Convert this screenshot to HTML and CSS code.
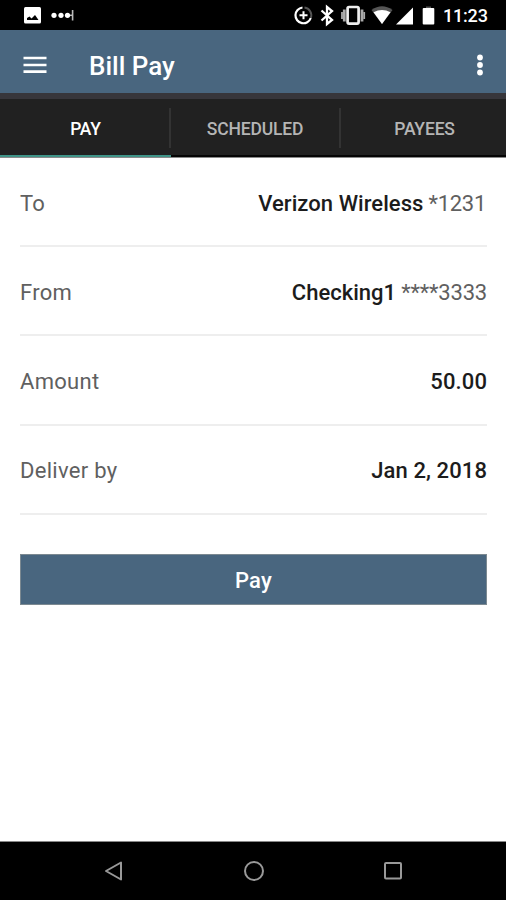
FILE: index.html
```html
<!DOCTYPE html>
<html lang="en">
<head>
<meta charset="utf-8">
<title>Bill Pay</title>
<link rel="stylesheet" href="styles.css">
</head>
<body>
<div class="screen">
  <div class="status">
    <svg class="status-left" width="52" height="30" viewBox="24 0 52 30">
      <rect x="24" y="7" width="17" height="16.500" rx="1.500" fill="#fff"/>
      <path d="M27 20V18L29.500 16.500 31.500 18.500 35 15 38.500 20Z" fill="#000"/>
      <g fill="#fff"><circle cx="54" cy="15.300" r="2.600"/><circle cx="61" cy="15.300" r="2.600"/><circle cx="67.500" cy="15.300" r="2.600"/></g>
      <path d="M70 15.300h3" stroke="#bbb" stroke-width="1.500"/><path d="M72.600 10v10.500" stroke="#bbb" stroke-width="1.600"/>
    </svg>
    <div class="status-right">
      <svg width="144" height="30" viewBox="293 0 144 30">
        <g fill="none" stroke="#fff">
          <path d="M302.500 7.500A7.900 7.900 0 1 0 310.800 18" stroke-width="2.200"/>
          <path d="M304.500 7.500A7.900 7.900 0 0 1 310.800 18" stroke="#555" stroke-width="2"/>
          <path d="M303.500 11.300v8M299.500 15.300h8" stroke-width="2"/>
          <path d="M321.500 10.500 332 20 327 24V7L332 11 321.500 20.500" stroke-width="2.300"/>
          <rect x="347.600" y="7" width="11" height="16.600" rx="1.500" stroke="#eee" stroke-width="2.700"/>
          <path d="M344.300 9.500v12M362 9.500v12" stroke="#aaa" stroke-width="2.800"/>
          <path d="M342 12v7M364.200 12v7" stroke="#aaa" stroke-width="1.800"/>
        </g>
        <path d="M371.500 10Q382 2.500 392.500 10L382 24Z" fill="#555"/>
        <path d="M373.500 12.300Q382 7.500 390.500 12.300L382 24Z" fill="#fff"/>
        <path d="M396 24.500 413 7.500V24.500Z" fill="#fff"/>
        <path d="M426 6.500h5V8h-5z" fill="#555"/><rect x="422.700" y="8" width="11.600" height="16.500" rx="1" fill="#fff"/>
      </svg>
      <span class="clock">11:23</span>
    </div>
  </div>
  <header class="appbar">
    <svg width="24" height="18" viewBox="0 0 24 18"><path d="M.5 2H23.500M.5 9H23.500M.5 15.700H23.500" stroke="#fff" stroke-width="2.700"/></svg>
    <h1>Bill Pay</h1>
    <svg width="8" height="22" viewBox="0 0 8 22" fill="#fff"><circle cx="4" cy="3.500" r="2.900"/><circle cx="4" cy="11" r="2.900"/><circle cx="4" cy="18.500" r="2.900"/></svg>
  </header>
  <nav class="tabs">
    <div class="tab active"><span>PAY</span></div>
    <div class="tab"><span>SCHEDULED</span></div>
    <div class="tab"><span>PAYEES</span></div>
  </nav>
  <main>
    <div class="row"><span class="label">To</span><span class="value verizon"><b>Verizon Wireless</b> *1231</span></div>
    <div class="row"><span class="label">From</span><span class="value checking"><b>Checking1</b> ****3333</span></div>
    <div class="row"><span class="label">Amount</span><span class="value"><b>50.00</b></span></div>
    <div class="row"><span class="label">Deliver by</span><span class="value"><b>Jan 2, 2018</b></span></div>
    <button class="pay">Pay</button>
  </main>
  <footer class="navbar">
    <svg width="20" height="22" viewBox="0 0 20 22"><path d="M17 2.500V19.500L2 11Z"/></svg>
    <svg width="22" height="22" viewBox="0 0 22 22"><circle cx="11" cy="11" r="9"/></svg>
    <svg width="20" height="22" viewBox="0 0 20 22"><rect x="2" y="3" width="16" height="15.500" rx="1"/></svg>
  </footer>
</div>
</body>
</html>
```
FILE: styles.css
```css
* { box-sizing: border-box; }
body { margin: 0; background: #fff; font-family: Roboto, sans-serif; }
svg { display: block; flex: none; }
.screen { width: 506px; height: 900px; display: flex; flex-direction: column; overflow: hidden; }
.status { height: 30px; flex: none; background: #000; display: flex; justify-content: space-between; padding: 0 18px 0 24px; }
.status-right { display: flex; align-items: center; }
.clock { width: 51px; padding: 2px 0 0 6px; color: #fff; font-size: 18px; font-weight: 500; line-height: 26px; letter-spacing: -.2px; white-space: nowrap; }
.appbar { height: 63px; flex: none; background: #49667f; display: flex; align-items: center; padding: 7px 22px 0 23px; }
.appbar h1 { flex: 1; margin: 0 0 0 42px; color: #fff; font-size: 26px; font-weight: 500; line-height: 32px; padding-top: 1px; }
.tabs { height: 65px; flex: none; background: #212121; border-top: 6px solid #37363b; border-bottom: 1px solid #8a8a8a; display: grid; grid-template-columns: 171px 170px 165px; }
.tab { display: flex; align-items: center; border-bottom: 2px solid #050505; color: #b5b5b5; font-size: 17.500px; font-weight: 500; letter-spacing: -.15px; }
.tab span { flex: 1; height: 40px; line-height: 43px; margin-top: 1px; text-align: center; border-right: 2px solid #333; }
.tab:first-child span { padding-left: 2px; }
.tab:last-child span { padding-left: 2px; border-right: 0; }
.tab.active { border-bottom-color: #3f9488; color: #fff; }
main { flex: 1; padding: 0 19px 0 20px; }
.row { height: 89.200px; padding-top: 4px; display: flex; justify-content: space-between; align-items: center; border-bottom: 2px solid #eee; color: #606060; font-size: 22px; line-height: 30px; white-space: nowrap; }
.label { letter-spacing: .3px; }
.value { letter-spacing: -.3px; }
.value b { color: #1c1c1c; font-weight: 500; letter-spacing: .1px; }
.verizon { padding-right: 1px; }
.value.verizon b { letter-spacing: .05px; }
.checking { letter-spacing: -.2px; }
.value.checking b { letter-spacing: 0; }
.pay { display: block; width: 100%; height: 51px; margin: 39px 0 0; padding: 3px 0 0; border: 1px solid #7c8991; background: #49667f; color: #fff; font: 500 22px/30px Roboto, sans-serif; letter-spacing: .2px; }
.navbar { height: 59px; flex: none; background: #000; border-top: 1px solid #888; display: flex; justify-content: space-between; align-items: center; padding: 0 103px 0 104px; }
.navbar svg { fill: none; stroke: #999; stroke-width: 2; stroke-linejoin: round; }
```
